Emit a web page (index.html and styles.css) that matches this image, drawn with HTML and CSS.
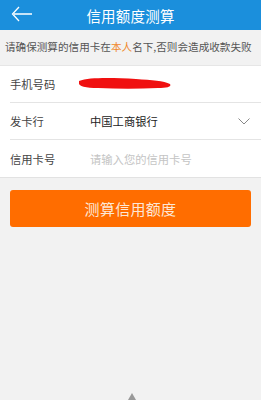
FILE: index.html
```html
<!DOCTYPE html>
<html lang="zh-CN">
<head>
    <meta charset="UTF-8">
    <meta name="viewport" content="width=device-width, initial-scale=1.0">
    <title>信用额度测算</title>
    <link rel="stylesheet" href="styles.css">
</head>
<body>
    <div class="header">
        <span class="back">
            <svg width="22" height="16" viewBox="0 0 22 16">
                <path d="M8 1 L1.5 8 L8 15 M3 8 H21" fill="none" stroke="#fff" stroke-width="1.3"/>
            </svg>
        </span>
        <h1>信用额度测算</h1>
    </div>

    <div class="notice">
        请确保测算的信用卡在<span class="hl">本人</span>名下,否则会造成收款失败
    </div>

    <div class="form">
        <div class="row">
            <span class="label">手机号码</span>
            <span class="value">
                <!-- redacted number -->
                <svg width="94" height="13" viewBox="0 0 94 13">
                    <path d="M1 4 C12 0 36 1 58 2 C74 3 86 4 92 7 C94 10 88 11 80 11 C60 12 40 12 20 11 C8 11 0 9 1 6 Z" fill="#f01010"/>
                </svg>
            </span>
        </div>
        <div class="row">
            <span class="label">发卡行</span>
            <span class="value">中国工商银行</span>
            <svg class="arrow" width="12" height="7" viewBox="0 0 12 7">
                <path d="M0.5 0.5 L6 6 L11.5 0.5" fill="none" stroke="#888" stroke-width="1"/>
            </svg>
        </div>
        <div class="row">
            <span class="label">信用卡号</span>
            <span class="value placeholder">请输入您的信用卡号</span>
        </div>
    </div>

    <button class="submit">测算信用额度</button>

    <span class="mark"></span>
</body>
</html>
```

FILE: styles.css
```css
* {
    margin: 0;
    padding: 0;
    box-sizing: border-box;
    font-family: "Noto Sans CJK SC", "Noto Sans", sans-serif;
}

body {
    background: #f2f2f2;
    width: 261px;
    height: 400px;
    position: relative;
    overflow: hidden;
}

.header {
    height: 30px;
    background: #1b8fdc;
    display: flex;
    align-items: center;
    justify-content: center;
    position: relative;
}

.back {
    position: absolute;
    left: 11px;
    top: 6px;
    display: flex;
}

.header h1 {
    color: #fff;
    font-size: 14.5px;
    font-weight: normal;
    letter-spacing: 0.2px;
}

.notice {
    height: 35px;
    line-height: 34px;
    padding-left: 5px;
    font-size: 10.6px;
    color: #555;
    white-space: nowrap;
}

.hl {
    color: #f0882a;
}

.form {
    background: #fff;
    border-top: 1px solid #e6e6e6;
    border-bottom: 1px solid #e2e2e2;
}

.row {
    height: 37px;
    margin-left: 10px;
    padding-right: 10px;
    display: flex;
    align-items: center;
    border-bottom: 1px solid #e4e4e4;
    font-size: 11.3px;
}

.row:last-child {
    border-bottom: none;
}

.label {
    width: 80px;
    color: #444;
}

.value {
    flex: 1;
    color: #222;
    display: flex;
    align-items: center;
}

.value svg {
    margin-left: -12px;
    margin-top: -2px;
}

.placeholder {
    color: #c4c4c4;
}

.arrow {
    margin-right: 1px;
}

.submit {
    display: block;
    width: 241px;
    height: 37px;
    margin: 12px 10px 0;
    border: none;
    border-radius: 3px;
    background: #ff6d00;
    color: #fde7d6;
    font-size: 15px;
    letter-spacing: 0.3px;
}

.mark {
    position: absolute;
    left: 128px;
    top: 393px;
    width: 0;
    height: 0;
    border-left: 4px solid transparent;
    border-right: 4px solid transparent;
    border-bottom: 7px solid #999;
}
```
